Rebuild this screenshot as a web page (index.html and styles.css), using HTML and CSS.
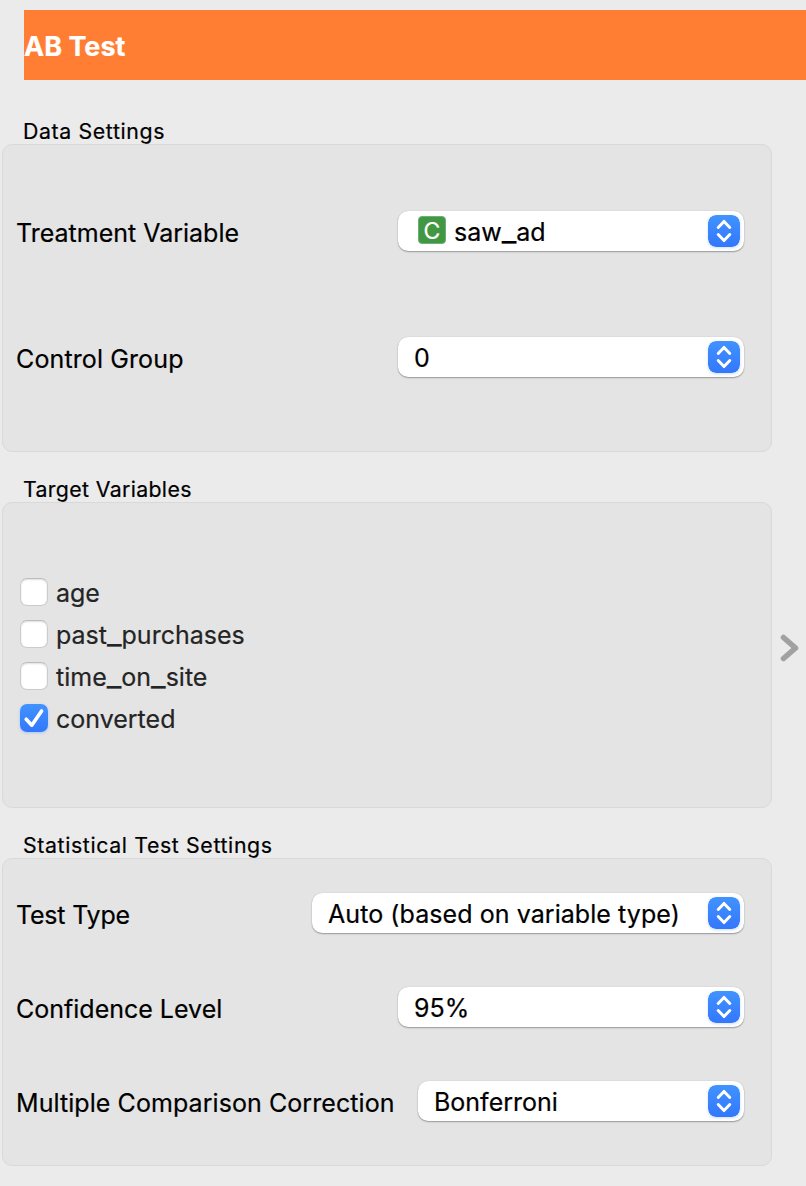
FILE: index.html
```html
<!DOCTYPE html>
<html lang="en">
<head>
<meta charset="utf-8">
<title>AB Test</title>
<link rel="stylesheet" href="styles.css">
</head>
<body>
<svg class="defs" aria-hidden="true">
  <defs>
    <linearGradient id="blue" x1="0" y1="0" x2="0" y2="1">
      <stop offset="0" stop-color="#4193ff"/><stop offset="1" stop-color="#3377fc"/>
    </linearGradient>
    <symbol id="stepper" viewBox="0 0 32 32">
      <rect width="32" height="32" rx="8" fill="url(#blue)"/>
      <path d="M10.2 12.5 16 6.4 21.8 12.5M10.2 19.5 16 25.6 21.8 19.5" fill="none" stroke="#fff" stroke-width="2.9" stroke-linecap="round" stroke-linejoin="round"/>
    </symbol>
  </defs>
</svg>
<header class="header"><h1 class="title">AB Test</h1></header>
<div class="body">
  <main class="settings">
    <section class="group">
      <h2 class="caption caption-loose">Data Settings</h2>
      <div class="panel panel-data">
        <div class="row">
          <span class="label">Treatment Variable</span>
          <div class="select"><span class="badge">C</span><span class="value">saw<span class="underscore">_</span>ad</span><svg class="stepper"><use href="#stepper"/></svg></div>
        </div>
        <div class="row">
          <span class="label label-loose">Control Group</span>
          <div class="select"><span class="value">0</span><svg class="stepper"><use href="#stepper"/></svg></div>
        </div>
      </div>
    </section>
    <section class="group">
      <h2 class="caption">Target Variables</h2>
      <div class="panel panel-targets">
        <div class="check"><span class="box"></span><span class="check-label">age</span></div>
        <div class="check"><span class="box"></span><span class="check-label">past<span class="underscore">_</span>purchases</span></div>
        <div class="check"><span class="box"></span><span class="check-label">time<span class="underscore">_</span>on<span class="underscore">_</span>site</span></div>
        <div class="check"><span class="box checked"><svg class="tick" viewBox="0 0 28 28"><path d="M6.2 15.2 11.8 21.2 21.6 6.9" fill="none" stroke="#fff" stroke-width="3.6" stroke-linecap="round" stroke-linejoin="round"/></svg></span><span class="check-label">converted</span></div>
      </div>
    </section>
    <section class="group">
      <h2 class="caption caption-loose">Statistical Test Settings</h2>
      <div class="panel panel-stats">
        <div class="row">
          <span class="label label-tight">Test Type</span>
          <div class="select select-wide"><span class="value value-loose">Auto (based on variable type)</span><svg class="stepper"><use href="#stepper"/></svg></div>
        </div>
        <div class="row">
          <span class="label">Confidence Level</span>
          <div class="select"><span class="value">95%</span><svg class="stepper"><use href="#stepper"/></svg></div>
        </div>
        <div class="row">
          <span class="label label-correction">Multiple Comparison Correction</span>
          <div class="select select-narrow"><span class="value">Bonferroni</span><svg class="stepper"><use href="#stepper"/></svg></div>
        </div>
      </div>
    </section>
  </main>
  <aside class="expander"><svg class="chevron" viewBox="0 0 20 28"><path d="M3.5 3.5 15.5 14 3.5 24.5" fill="none" stroke="#a1a1a1" stroke-width="5.6" stroke-linecap="round" stroke-linejoin="round"/></svg></aside>
</div>
</body>
</html>
```

FILE: styles.css
```css
* { box-sizing: border-box; }
body {
  margin: 0;
  height: 1186px;
  padding-top: 10px;
  overflow: hidden;
  background: #ebebeb;
  color: #000;
  font-family: Inter, "Liberation Sans", sans-serif;
  font-size: 25px;
  -webkit-text-stroke: 0.2px;
}
.defs { display: block; width: 0; height: 0; }
.header {
  display: flex;
  align-items: center;
  height: 70px;
  margin-left: 24px;
  background: #ff7e33;
}
.title {
  margin: 0;
  padding-top: 2px;
  color: #fff;
  font-size: 27px;
  font-weight: 700;
  letter-spacing: 0;
}
.body { display: flex; }
.settings { width: 772px; padding: 38px 0 0 2px; }
.caption {
  height: 26px;
  margin: 0;
  padding-left: 21px;
  font-size: 21.3px;
  font-weight: 400;
  line-height: 26px;
  letter-spacing: 0.35px;
}
.caption-loose { letter-spacing: 0.63px; }
.panel {
  display: flex;
  flex-direction: column;
  border: 1px solid #d9d9d9;
  border-radius: 10px;
  background: #e4e4e4;
}
.panel-data { height: 308px; padding: 66px 27px 0 13px; gap: 86px; margin-bottom: 24px; }
.panel-targets { height: 306px; padding: 68px 17px 0; margin-bottom: 24px; }
.panel-stats { height: 308px; padding: 34px 27px 0 13px; gap: 54px; }
.row { display: flex; align-items: center; justify-content: space-between; height: 40px; }
.label { padding-top: 3px; white-space: nowrap; }
.label-loose { letter-spacing: 0.12px; }
.label-tight { letter-spacing: -0.2px; }
.label-correction { letter-spacing: 0.07px; }
.select {
  display: flex;
  align-items: center;
  width: 346px;
  height: 40px;
  padding: 0 4px 0 16px;
  border-radius: 10px;
  background: #fff;
  box-shadow: 0 1px 1.5px rgba(0,0,0,.32), 0 0 1px rgba(0,0,0,.2);
}
.select-wide { width: 432px; }
.select-narrow { width: 326px; }
.value { padding-top: 1px; white-space: nowrap; }
.value-loose { letter-spacing: 0.07px; }
.underscore { font-size: 32px; line-height: 0; }
.stepper {
  width: 32px;
  height: 32px;
  margin-left: auto;
  border-radius: 8px;
  box-shadow: 0 1px 3px rgba(50,120,255,.25);
}
.badge {
  display: flex;
  align-items: center;
  justify-content: center;
  width: 28px;
  height: 28px;
  margin: -2px 8px 0 4px;
  padding-top: 2px;
  border: 1px solid #69b07b;
  border-radius: 4px;
  background: #429842;
  color: #fff;
  font-size: 23px;
}
.check { display: flex; align-items: center; gap: 8px; height: 42px; }
.box {
  width: 28px;
  height: 28px;
  border: 1px solid #cbcbcb;
  border-top-color: #bcbcbc;
  border-radius: 7px;
  background: #fff;
  box-shadow: inset 0 1px 2px rgba(0,0,0,.13);
}
.checked { border: 0; background: linear-gradient(#4193ff, #3377fc); box-shadow: 0 1px 3px rgba(50,120,255,.3); }
.tick { display: block; width: 28px; height: 28px; }
.check-label { padding-top: 2px; color: #242424; }
.expander { width: 34px; padding: 554px 0 0 8px; }
.chevron { display: block; width: 20px; height: 28px; }
```
